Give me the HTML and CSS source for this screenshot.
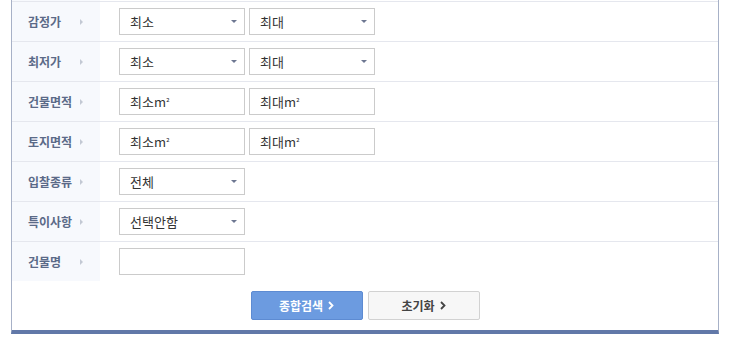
FILE: index.html
```html
<!DOCTYPE html>
<html lang="ko">
<head>
    <meta charset="UTF-8">
    <title>상세검색</title>
    <link rel="stylesheet" href="styles.css">
</head>
<body>
    <div class="panel">
        <div class="row">
            <div class="label">감정가</div>
            <div class="field">
                <div class="select">최소</div>
                <div class="select">최대</div>
            </div>
        </div>
        <div class="row">
            <div class="label">최저가</div>
            <div class="field">
                <div class="select">최소</div>
                <div class="select">최대</div>
            </div>
        </div>
        <div class="row">
            <div class="label">건물면적</div>
            <div class="field">
                <div class="input">최소m<span class="sq">²</span></div>
                <div class="input">최대m<span class="sq">²</span></div>
            </div>
        </div>
        <div class="row">
            <div class="label">토지면적</div>
            <div class="field">
                <div class="input">최소m<span class="sq">²</span></div>
                <div class="input">최대m<span class="sq">²</span></div>
            </div>
        </div>
        <div class="row">
            <div class="label">입찰종류</div>
            <div class="field">
                <div class="select">전체</div>
            </div>
        </div>
        <div class="row">
            <div class="label">특이사항</div>
            <div class="field">
                <div class="select">선택안함</div>
            </div>
        </div>
        <div class="row">
            <div class="label">건물명</div>
            <div class="field">
                <div class="input"></div>
            </div>
        </div>
        <div class="buttons">
            <button class="btn btn-search">종합검색
                <svg class="chev" width="6" height="9" viewBox="0 0 6 9"><path d="M1 1 L4.5 4.5 L1 8" fill="none" stroke="currentColor" stroke-width="1.8"/></svg>
            </button>
            <button class="btn btn-reset">초기화
                <svg class="chev" width="6" height="9" viewBox="0 0 6 9"><path d="M1 1 L4.5 4.5 L1 8" fill="none" stroke="currentColor" stroke-width="1.8"/></svg>
            </button>
        </div>
    </div>
</body>
</html>
```

FILE: styles.css
```css
body {
    margin: 0;
    background-color: #fff;
    font-family: "Noto Sans CJK KR", "Noto Sans", sans-serif;
}
.panel {
    margin: 0 11px;
    width: 706px;
    padding-top: 1px;
    border-left: 1px solid #a7b1c7;
    border-right: 1px solid #a7b1c7;
    border-bottom: 4px solid #6178a8;
    background: linear-gradient(to right, #f7f9fd 88px, #fff 88px) no-repeat;
    background-size: 100% 281px;
}
.row {
    display: flex;
    height: 39px;
    border-top: 1px solid #e5e7ee;
}
.row:last-of-type {
    border-bottom: 1px solid #e5e7ee;
}
.label {
    position: relative;
    width: 88px;
    box-sizing: border-box;
    padding-left: 16px;
    line-height: 39px;
    font-size: 12px;
    font-weight: bold;
    color: #5b6a88;
}
.label::after {
    content: "";
    position: absolute;
    left: 68px;
    top: 17px;
    border-left: 3px solid #c3c9d4;
    border-top: 3px solid transparent;
    border-bottom: 3px solid transparent;
}
.field {
    display: flex;
    align-items: center;
    gap: 4px;
    padding-left: 19px;
}
.select, .input {
    position: relative;
    width: 126px;
    height: 27px;
    box-sizing: border-box;
    border: 1px solid #cbcbcb;
    background: #fff;
    padding-left: 10px;
    font-size: 13px;
    line-height: 25px;
    color: #333;
}
.sq {
    font-size: 9px;
    vertical-align: 1px;
}
.select::after {
    content: "";
    position: absolute;
    right: 7px;
    top: 11px;
    border-top: 3px solid #6d7791;
    border-left: 3px solid transparent;
    border-right: 3px solid transparent;
}
.buttons {
    display: flex;
    justify-content: center;
    gap: 5px;
    padding: 10px 0;
}
.btn {
    display: flex;
    align-items: center;
    justify-content: center;
    gap: 5px;
    width: 112px;
    height: 29px;
    border-radius: 2px;
    font-family: "Noto Sans CJK KR", "Noto Sans", sans-serif;
    font-size: 12px;
    font-weight: bold;
    cursor: pointer;
}
.btn-search {
    background-color: #6c9be0;
    border: 1px solid #5d8bd2;
    color: #fff;
}
.btn-reset {
    background-color: #f7f7f7;
    border: 1px solid #d2d2d2;
    color: #444;
}
```
